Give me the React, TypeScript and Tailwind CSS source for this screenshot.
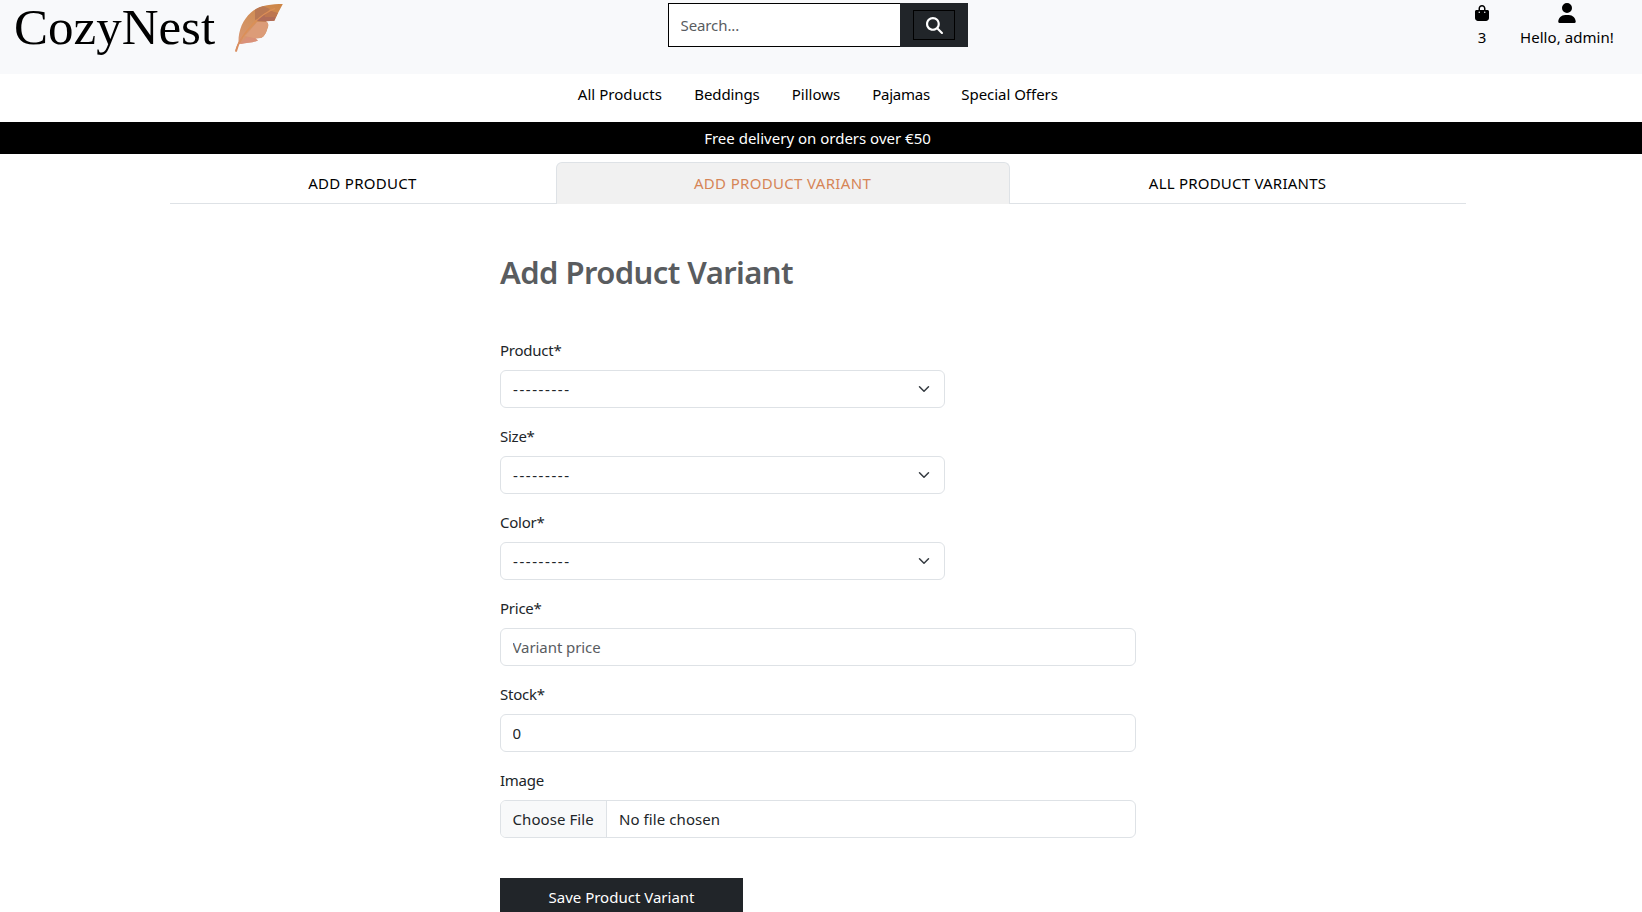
import type { ReactNode } from "react";
import { FaBagShopping, FaMagnifyingGlass, FaUser } from "react-icons/fa6";

function FeatherLogo() {
  return (
    <svg width="65" height="60" viewBox="0 0 65 60" aria-hidden="true">
      <defs>
        <linearGradient id="feather" x1="0.8" y1="0" x2="0.3" y2="1">
          <stop offset="0" stopColor="#cc8444" />
          <stop offset="0.5" stopColor="#d39362" />
          <stop offset="1" stopColor="#de9a80" />
        </linearGradient>
        <clipPath id="featherShape">
          <path d="M13.500 43.500C13 31 17.500 20 26 12.500C34 5.500 45 4 57.800 4C55 9 52 15 49.500 20.800L41 21.200C43.800 23 43.800 26 42.500 28.500C41.500 32 39.500 36.500 36 38L30.500 38.500L33 40.500C28 43 22 42.500 16 44Z" />
        </clipPath>
      </defs>
      <g clipPath="url(#featherShape)">
        <rect width="65" height="60" fill="url(#feather)" />
        <path d="M30 8L38 6L45 9L38 17L30 20Z" fill="#b97853" />
        <path d="M31 21L38 14L46 11L52 14L49 22Z" fill="#b06c58" />
        <path d="M39 13L46 11L53 13L51 17L40 17Z" fill="#bd7650" />
        <path d="M20 36L32 22L44 22L40 38L28 38Z" fill="#dc9c78" />
        <path d="M14 45L22 37L36 39L30 45Z" fill="#da8d80" opacity="0.6" />
      </g>
      <path d="M10.800 51.500C12 44 19 34 28 24C35 16.500 42 11.500 50 8.500" fill="none" stroke="#dc8f56" strokeWidth="1.300" />
      <path d="M11 51.500C12 46.500 13.500 43 17 38" fill="none" stroke="#d98e62" strokeWidth="1.800" />
    </svg>
  );
}

const links = [
  { label: "All Products", style: "w-[84.5px] tracking-[0.05px]" },
  { label: "Beddings", style: "w-[65.5px] tracking-[-0.1px]" },
  { label: "Pillows", style: "w-[48.5px]" },
  { label: "Pajamas", style: "w-[57px] tracking-[-0.25px]" },
  { label: "Special Offers", style: "w-[97px] tracking-[-0.03px]" },
];

function Field({ label, children }: { label: string; children: ReactNode }) {
  return (
    <div className="mb-4 flex flex-col">
      <label className="mb-2 h-6 leading-6 tracking-[-0.25px]">{label}</label>
      {children}
    </div>
  );
}

function Select() {
  return (
    <div className="flex h-[38px] w-[445px] items-center justify-between rounded-md border border-[#dee2e6] bg-white px-3">
      <span className="tracking-[1.57px]">---------</span>
      <svg width="16" height="12" viewBox="0 0 16 16" fill="none" stroke="#343a40" strokeWidth="2" strokeLinecap="round" strokeLinejoin="round">
        <path d="m2 5 6 6 6-6" />
      </svg>
    </div>
  );
}

export default function App() {
  return (
    <div className="h-[912px] overflow-hidden bg-white font-['Noto_Sans','Open_Sans',sans-serif] text-[15px] leading-6 text-[#212529]">
      <header className="grid h-[74px] grid-cols-[1fr_300px_1fr] bg-[#f8f9fb] pr-1.5 text-black">
        <a className="flex items-start pl-[14px]">
          <span className="w-[211px] font-['Liberation_Serif',serif] text-[51px] leading-[54px] whitespace-nowrap">CozyNest</span>
          <FeatherLogo />
        </a>
        <form className="mt-[3px] flex h-11">
          <input
            className="w-[232px] border border-r-0 border-black bg-white px-[11.5px] tracking-[-0.1px] outline-none placeholder:text-[#595c5f]"
            placeholder="Search..."
          />
          <div className="flex w-[68px] items-center justify-center bg-[#212529]">
            <button type="button" className="flex h-[30px] w-[42px] items-center justify-center border border-black text-white">
              <FaMagnifyingGlass size={17} />
            </button>
          </div>
        </form>
        <div className="flex justify-end pr-[22px]">
          <div className="mr-[30px] flex flex-col items-center pt-[5px]">
            <FaBagShopping size={16} />
            <span className="mt-1 leading-6">3</span>
          </div>
          <div className="flex flex-col items-center pt-[3px]">
            <FaUser size={20} />
            <span className="mt-0.5 w-[94px] leading-6 tracking-[0.05px] whitespace-nowrap">Hello, admin!</span>
          </div>
        </div>
      </header>

      <nav className="flex h-12 justify-center gap-8 pt-2 pr-1.5 text-black">
        {links.map((l) => (
          <a key={l.label} className={`${l.style} whitespace-nowrap`}>
            {l.label}
          </a>
        ))}
      </nav>
      <div className="flex h-8 items-center justify-center bg-black pr-[7px] text-white">Free delivery on orders over €50</div>

      <div className="pr-[7px]">
        <div className="mx-auto mt-2 flex h-[42px] w-[1296px] text-black">
          <a className="flex w-[386px] items-center justify-center border-b border-[#dee2e6] tracking-[0.3px]">ADD PRODUCT</a>
          <a className="flex w-[454px] items-center justify-center rounded-t-md border border-b-0 border-[#dee2e6] bg-[#f1f1f1] pb-0.5 tracking-[0.33px] text-[#d68557]">
            ADD PRODUCT VARIANT
          </a>
          <a className="flex flex-1 items-center justify-center border-b border-[#dee2e6] tracking-[0.22px]">ALL PRODUCT VARIANTS</a>
        </div>
      </div>

      <main className="mx-auto w-[642px] pt-12 pr-1.5">
        <h2 className="h-[86px] text-[31px] leading-[40px] font-semibold tracking-[-0.57px] text-[#595c5f]">Add Product Variant</h2>
        <Field label="Product*">
          <Select />
        </Field>
        <Field label="Size*">
          <Select />
        </Field>
        <Field label="Color*">
          <Select />
        </Field>
        <Field label="Price*">
          <input
            className="h-[38px] w-full rounded-md border border-[#dee2e6] px-[11.5px] tracking-[-0.08px] outline-none placeholder:text-[#595c5f]"
            placeholder="Variant price"
          />
        </Field>
        <Field label="Stock*">
          <input className="h-[38px] w-full rounded-md border border-[#dee2e6] px-[11.5px] outline-none" defaultValue="0" />
        </Field>
        <Field label="Image">
          <div className="flex h-[38px] w-full items-center overflow-hidden rounded-md border border-[#dee2e6]">
            <span className="flex h-full w-[106px] items-center border-r border-[#dee2e6] bg-[#f8f9fa] pl-[11.5px] tracking-[0.08px] whitespace-nowrap">
              Choose File
            </span>
            <span className="pl-3 tracking-[0.08px]">No file chosen</span>
          </div>
        </Field>
        <button type="button" className="mt-6 h-[38px] w-[243px] bg-[#212529] text-white">
          Save Product Variant
        </button>
      </main>
    </div>
  );
}
